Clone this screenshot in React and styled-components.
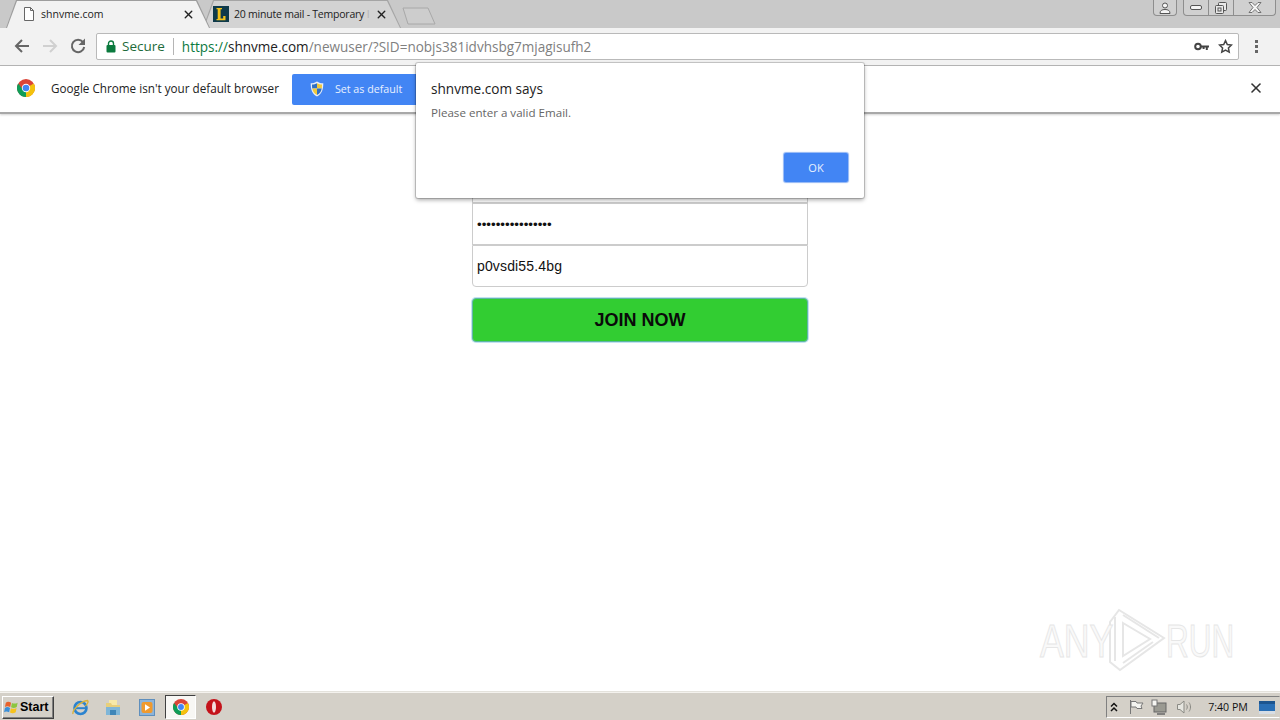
import React from "react";
import styled, { createGlobalStyle } from "styled-components";
import { X } from "lucide-react";

const uiFont = `"Open Sans", "Noto Sans", sans-serif`;

const Global = createGlobalStyle`
html, body {
  margin: 0;
  height: 100%;
  overflow: hidden;
  background: #fff;
}
* { box-sizing: border-box; }
`;

const Screen = styled.div`
position: relative;
display: flex;
flex-direction: column;
width: 100%;
height: 100vh;
font-family: ${uiFont};
`;

const TabStrip = styled.div`
display: flex;
align-items: flex-start;
height: 28px;
padding-left: 6px;
background: #c9c9c9;
flex-shrink: 0;
`;

const Tab = styled.div`
position: relative;
display: flex;
align-items: center;
width: ${(p) => p.$width}px;
height: 28px;
margin-left: ${(p) => (p.$active ? 0 : -7)}px;
padding-left: ${(p) => p.$pad}px;
z-index: ${(p) => (p.$active ? 2 : 1)};
&::before {
  content: "";
  position: absolute;
  inset: 0;
  background: ${(p) => (p.$active ? "#9d9d9d" : "#a5a5a5")};
  clip-path: polygon(0 100%, 10px 0, calc(100% - 13px) 0, 100% 100%);
}
&::after {
  content: "";
  position: absolute;
  inset: 1px 1px 0 1px;
  background: ${(p) => (p.$active ? "#f2f2f2" : "#d3d3d3")};
  clip-path: polygon(0 100%, 10px 0, calc(100% - 13px) 0, 100% 100%);
}
`;

const TabLabel = styled.span`
position: relative;
z-index: 1;
width: ${(p) => p.$width}px;
margin-left: ${(p) => p.$gap}px;
white-space: nowrap;
font-size: 10.5px;
letter-spacing: ${(p) => p.$spacing || 0}px;
color: #222;
`;

const TabFade = styled.span`
color: #b4b4b4;
`;

const TabIcon = styled.span`
position: relative;
z-index: 1;
display: flex;
`;

const TabClose = styled.span`
position: relative;
z-index: 1;
display: flex;
margin-left: ${(p) => p.$gap}px;
color: #222;
`;

const NewTab = styled.svg`
margin: 6px 0 0 1px;
flex-shrink: 0;
`;

const WindowArea = styled.div`
display: flex;
align-items: flex-start;
gap: 6px;
margin-left: auto;
padding-right: 4px;
`;

const WindowGroup = styled.div`
display: flex;
height: 16px;
border: 1px solid #8e8e8e;
border-top: none;
border-radius: 0 0 4px 4px;
background: #d0d0d0;
`;

const WindowBtn = styled.div`
display: flex;
align-items: center;
justify-content: center;
width: ${(p) => p.$width}px;
& + & { border-left: 1px solid #8e8e8e; }
`;

const Toolbar = styled.div`
display: flex;
align-items: center;
height: 38px;
padding: 0 0 1px 13px;
background: #f2f2f2;
border-bottom: 1px solid #b6b6b6;
flex-shrink: 0;
`;

const NavBtn = styled.div`
display: flex;
width: 18px;
margin-right: ${(p) => p.$gap}px;
`;

const Omnibox = styled.div`
display: flex;
align-items: center;
width: 1143px;
height: 27px;
margin-left: 9px;
padding: 1px 0 0 9px;
background: #fff;
border: 1px solid #b9b9b9;
border-radius: 2px;
`;

const SecureText = styled.span`
margin-left: 6px;
padding-right: 8px;
border-right: 1px solid #b5b5b5;
font-size: 13.5px;
line-height: 17px;
color: #1e6b3a;
`;

const Url = styled.div`
margin-left: 8px;
font-size: 13.54px;
white-space: nowrap;
color: #808080;
`;

const UrlScheme = styled.span`
color: #0b7a3e;
`;

const UrlHost = styled.span`
color: #222;
`;

const OmniIcons = styled.div`
display: flex;
align-items: center;
gap: 9px;
margin-left: auto;
padding-right: 5px;
`;

const MenuDots = styled.div`
display: flex;
flex-direction: column;
gap: 2px;
margin-left: 16px;
`;

const Dot = styled.i`
width: 3px;
height: 3px;
background: #666;
`;

const InfoBar = styled.div`
position: relative;
display: flex;
align-items: center;
height: 48px;
padding: 0 16px 2px 17px;
background: #fff;
border-bottom: 2px solid #a8a8a8;
box-shadow: 0 1px 2px rgba(0, 0, 0, 0.18);
flex-shrink: 0;
`;

const InfoText = styled.span`
margin-left: 16px;
font-size: 11.7px;
color: #222;
white-space: nowrap;
`;

const DefaultBtn = styled.div`
display: flex;
align-items: center;
width: 130px;
height: 31px;
margin: 2px 0 0 13px;
padding-left: 18px;
background: #4285f4;
border-radius: 2px;
color: #fff;
font-size: 10.7px;
`;

const DefaultLabel = styled.span`
margin-left: 11px;
color: #e8f0fe;
`;

const InfoClose = styled.div`
display: flex;
margin-left: auto;
color: #333;
`;

const Page = styled.main`
flex: 1;
display: flex;
flex-direction: column;
align-items: center;
padding-top: 47px;
background: #fff;
`;

const Form = styled.form`
display: flex;
flex-direction: column;
width: 336px;
`;

const Field = styled.input`
display: block;
width: 100%;
height: 42px;
padding: 0 4px;
border: 1px solid #ccc;
border-radius: ${(p) => (p.$last ? "0 0 4px 4px" : "0")};
background: #fff;
outline: none;
font-family: "Liberation Sans", Arial, sans-serif;
font-size: 14px;
letter-spacing: 0.15px;
color: #111;
`;

const PasswordField = styled(Field)`
font-size: 13.33px;
letter-spacing: 0;
`;

const JoinBtn = styled.button`
height: 44px;
margin-top: 11px;
border: 1px solid #5fb6a6;
border-radius: 4px;
background: #32cd32;
box-shadow: 0 0 0 1px rgba(120, 190, 225, 0.45);
font-family: "Liberation Sans", Arial, sans-serif;
font-size: 18px;
font-weight: 700;
color: #0a0a0a;
`;

const Dialog = styled.div`
position: absolute;
top: 63px;
left: 416px;
width: 448px;
height: 135px;
padding: 15px 16px 0 15px;
display: flex;
flex-direction: column;
background: #fff;
border-radius: 2px;
box-shadow: 0 0 0 1px rgba(0, 0, 0, 0.16), 0 2px 4px rgba(0, 0, 0, 0.35);
z-index: 5;
`;

const DialogTitle = styled.div`
font-size: 13.6px;
line-height: 21px;
color: #222;
`;

const DialogMsg = styled.div`
margin-top: 6px;
font-size: 11.6px;
line-height: 16px;
color: #666;
`;

const DialogOk = styled.div`
display: flex;
align-items: center;
justify-content: center;
align-self: flex-end;
width: 64px;
height: 29px;
margin-top: auto;
margin-bottom: 16px;
border-radius: 2px;
background: #4285f4;
box-shadow: 0 0 1px 1px #8fb5f5;
color: #e8f0fe;
font-size: 11px;
`;

const Watermark = styled.div`
position: absolute;
left: 1040px;
top: 607px;
display: flex;
align-items: center;
height: 66px;
pointer-events: none;
`;

const WatermarkWord = styled.span`
display: block;
width: ${(p) => p.$width}px;
transform: scaleX(${(p) => p.$scale});
transform-origin: left center;
font-family: "Liberation Sans", Arial, sans-serif;
font-size: 47px;
line-height: 1;
color: #f9f9f9;
-webkit-text-stroke: 1px #e6e6e6;
white-space: nowrap;
`;

const Taskbar = styled.footer`
display: flex;
align-items: center;
height: 28px;
padding: 1px 0 0 2px;
background: #d4d0c8;
border-top: 1px solid #f4f2ee;
box-shadow: 0 -1px 0 #e4e2dc;
flex-shrink: 0;
`;

const StartBtn = styled.div`
display: flex;
align-items: center;
gap: 1px;
width: 52px;
height: 23px;
padding-left: 1px;
background: #d4d0c8;
border: 1px solid;
border-color: #fff #404040 #404040 #fff;
box-shadow: inset -1px -1px 0 #808080;
font-family: "Liberation Sans", Arial, sans-serif;
font-size: 12.5px;
font-weight: 700;
color: #000;
`;

const Launch = styled.div`
display: flex;
align-items: center;
justify-content: center;
width: ${(p) => p.$width || 18}px;
height: 24px;
margin-left: ${(p) => p.$gap}px;
background: ${(p) => (p.$active ? "#f8f7f4" : "transparent")};
border: ${(p) => (p.$active ? "1px solid" : "none")};
border-color: #404040 #fff #fff #404040;
`;

const Tray = styled.div`
display: flex;
align-items: center;
height: 22px;
margin-left: auto;
padding-left: 1px;
border: 1px solid;
border-color: #808080 transparent #fff #808080;
`;

const TraySlot = styled.div`
display: flex;
justify-content: center;
width: ${(p) => p.$width}px;
`;

const Clock = styled.span`
width: 54px;
text-align: center;
font-size: 10.6px;
color: #111;
`;

const ChromeLogo = ({ size = 18 }) => (
    <svg width={size} height={size} viewBox="0 0 24 24">
        <circle cx="12" cy="12" r="12" fill="#db4437" />
        <path d="M12 12 L22.4 6 A12 12 0 0 1 12 24 Z" fill="#f4c20d" />
        <path d="M12 12 L12 24 A12 12 0 0 1 1.6 6 L7 13 Z" fill="#0f9d58" />
        <circle cx="12" cy="12" r="5.6" fill="#fff" />
        <circle cx="12" cy="12" r="4.4" fill="#4285f4" />
    </svg>
);

const BackIcon = ({ color }) => (
    <svg width="18" height="18" viewBox="0 0 18 18" fill="none" stroke={color} strokeWidth="2">
        <path d="M16 9H3M9 3L3 9l6 6" />
    </svg>
);

const ForwardIcon = ({ color }) => (
    <svg width="18" height="18" viewBox="0 0 18 18" fill="none" stroke={color} strokeWidth="2">
        <path d="M2 9h13M9 3l6 6-6 6" />
    </svg>
);

const ReloadIcon = () => (
    <svg width="18" height="18" viewBox="0 0 18 18" fill="none">
        <path d="M14 5.2A6.2 6.2 0 1 0 15.2 10" stroke="#666" strokeWidth="2" />
        <path d="M16 1.5V8H9.5z" fill="#666" />
    </svg>
);

const LockIcon = () => (
    <svg width="10" height="13" viewBox="0 0 10 13">
        <path d="M2.5 5V3.5a2.5 2.5 0 0 1 5 0V5" fill="none" stroke="#0b7a3e" strokeWidth="1.4" />
        <rect x="0.5" y="5" width="9" height="7.5" rx="1" fill="#0b7a3e" />
    </svg>
);

const KeyIcon = () => (
    <svg width="15" height="9" viewBox="0 0 15 9">
        <circle cx="4" cy="4.5" r="2.8" fill="none" stroke="#444" strokeWidth="2" />
        <path d="M6.5 3.4H15v2.2h-1.2V8h-2V5.6h-1.2V7h-2V5.6H6.5z" fill="#444" />
    </svg>
);

const StarIcon = () => (
    <svg width="15" height="15" viewBox="0 0 15 15" fill="none" stroke="#444" strokeWidth="1.5">
        <path d="M7.5 1.6l1.8 3.9 4.2.5-3.1 2.9.8 4.2-3.7-2.1-3.7 2.1.8-4.2L1.5 6l4.2-.5z" />
    </svg>
);

const DocIcon = () => (
    <svg width="12" height="14" viewBox="0 0 12 14" fill="#fff" stroke="#666">
        <path d="M1.5.5h6l3 3v10h-9zM7.5.5v3h3" />
    </svg>
);

const LetterFavicon = () => (
    <svg width="16" height="16" viewBox="0 0 16 16">
        <rect width="16" height="16" fill="#0e3a4a" />
        <path d="M3.5 2h5.5v1.2H7.6v9.4h2.6V10h2.3v4.2h-9V13h1.2V3.2H3.5z" fill="#f2c21a" />
    </svg>
);

const ShieldIcon = () => (
    <svg width="14" height="16" viewBox="0 0 14 16">
        <path d="M7 .5c2 1.3 4 1.8 6.3 1.8 0 6-1.3 10.700-6.300 13.200C2 13 .700 8.300.700 2.300 3 2.300 5 1.800 7 .5z" fill="#e9eef6" />
        <path d="M7 2.300v5.200H2.200c-.1-1.200-.2-2.300-.2-3.900C3.800 3.500 5.500 3.200 7 2.300z" fill="#2f6fc4" />
        <path d="M7 2.300c1.500.9 3.200 1.200 5 1.300 0 1.600-.1 2.700-.2 3.900H7z" fill="#f1c93b" />
        <path d="M2.300 7.500H7v6.600C4 12.500 2.800 10.300 2.300 7.500z" fill="#f1c93b" />
        <path d="M7 7.500h4.700c-.5 2.800-1.700 5-4.700 6.600z" fill="#2f6fc4" />
    </svg>
);

const UserIcon = () => (
    <svg width="12" height="12" viewBox="0 0 12 12" fill="#f5f5f5" stroke="#555">
        <circle cx="6" cy="3.500" r="2.500" />
        <path d="M1 11.500c0-3 2-4 5-4s5 1 5 4z" />
    </svg>
);

const MinIcon = () => (
    <svg width="12" height="7" viewBox="0 0 12 7" fill="#f5f5f5" stroke="#555">
        <rect x="0.500" y="1.500" width="11" height="4" rx="1.500" />
    </svg>
);

const RestoreIcon = () => (
    <svg width="12" height="12" viewBox="0 0 12 12" fill="#e8e8e8" stroke="#555">
        <rect x="3.500" y="0.500" width="8" height="8" rx="1" />
        <rect x="0.500" y="3.500" width="8" height="8" rx="1" />
        <rect x="3" y="6" width="3" height="3" fill="none" />
    </svg>
);

const CloseGlyph = () => (
    <svg width="14" height="11" viewBox="0 0 14 11" fill="#f5f5f5" stroke="#666" strokeWidth="0.900">
        <path d="M1 .5h3L7 3.500 10 .5h3L9 5.500l4 5h-3L7 7.500 4 10.500H1l4-5z" />
    </svg>
);

const WatermarkLogo = () => (
    <svg width="60" height="64" viewBox="0 0 60 64" fill="none" stroke="#e6e6e6" strokeWidth="2">
        <path d="M4 14L13 2l45 28-44 32-10-8z" />
        <path d="M17 15l27 16-27 17z" />
        <path d="M9 9v44M17 7l36 23M17 55l30-21" />
    </svg>
);

const WinFlag = () => (
    <svg width="15" height="14" viewBox="0 0 17 16">
        <path d="M2 3c2-1.500 4-1 6 0l-1 5c-2-1-4-1.500-6 0z" fill="#e8622c" />
        <path d="M9 3.300c2 1 4 1.200 6.500-.3l-1 5c-2.500 1.500-4.500 1.300-6.500.3z" fill="#8cc63f" />
        <path d="M1 9c2-1.500 4-1 5.800 0l-1 5c-2-1-3.800-1.500-5.800 0z" fill="#3a8fd9" />
        <path d="M7.800 9.300c2 1 4 1.200 6.500-.3l-1 5c-2.500 1.500-4.500 1.300-6.500.3z" fill="#f6c21c" />
    </svg>
);

const IeIcon = () => (
    <svg width="17" height="17" viewBox="0 0 17 17">
        <circle cx="8.500" cy="9" r="6" fill="none" stroke="#2b83cf" strokeWidth="2.600" />
        <path d="M3 9.200h11" stroke="#2b83cf" strokeWidth="2" />
        <path d="M1 15C0 11 9 2 15.500 1.500c1.500 1-.5 4-2 5.500" fill="none" stroke="#d8b23c" strokeWidth="1.400" />
    </svg>
);

const FolderIcon = () => (
    <svg width="16" height="17" viewBox="0 0 16 17">
        <path d="M4 1h8v6H4z" fill="#f6e9a8" />
        <path d="M1 4h5l1 2h8v10H1z" fill="#e7cf7b" />
        <path d="M1 8h14v8H1z" fill="#7fb6d8" />
        <path d="M5 11h6v5H5z" fill="#3f86b8" />
    </svg>
);

const MediaIcon = () => (
    <svg width="16" height="17" viewBox="0 0 16 17">
        <rect x="0.500" y="0.500" width="15" height="16" fill="#8db4d9" stroke="#5f8fbd" />
        <rect x="2.500" y="3" width="11" height="11" rx="2" fill="#f09a2e" />
        <path d="M6 5.200l5 3.300-5 3.300z" fill="#fff" />
    </svg>
);

const OperaIcon = () => (
    <svg width="16" height="16" viewBox="0 0 16 16">
        <circle cx="8" cy="8" r="8" fill="#c4121a" />
        <ellipse cx="8" cy="8" rx="2" ry="5.800" fill="#f3dcdc" />
    </svg>
);

const TrayChevrons = () => (
    <svg width="8" height="10" viewBox="0 0 8 10" fill="none" stroke="#111" strokeWidth="1.500">
        <path d="M1 4.500l3-3 3 3M1 9l3-3 3 3" />
    </svg>
);

const TrayFlag = () => (
    <svg width="16" height="16" viewBox="0 0 16 16" fill="#f4f4f0" stroke="#777">
        <path d="M2.500 1v14" />
        <path d="M3 2.500h5l1 1.500h6l-2 3 1 2.500H9L8 8H3z" />
    </svg>
);

const TrayNetwork = () => (
    <svg width="16" height="16" viewBox="0 0 16 16">
        <rect x="3" y="4" width="12" height="9" fill="#9a9a92" stroke="#666" />
        <rect x="1" y="1" width="5" height="6" fill="#f6f6f2" stroke="#777" />
        <path d="M6 15h8" stroke="#666" strokeWidth="1.500" />
    </svg>
);

const TraySpeaker = () => (
    <svg width="17" height="16" viewBox="0 0 17 16" fill="none" stroke="#8a8a84">
        <path d="M1.500 5.500h2.500l4-3.500v12l-4-3.500H1.500z" fill="#e6e6e0" />
        <path d="M10.500 5.500c1 1.500 1 3.500 0 5M13 3.500c2 2.500 2 6.500 0 9" />
    </svg>
);

const DesktopIcon = () => (
    <svg width="16" height="13" viewBox="0 0 16 13">
        <rect width="16" height="13" fill="#2a6fb5" />
        <rect y="10" width="16" height="3" fill="#d7dde4" />
        <path d="M0 0h16v3H0z" fill="#1d558f" />
    </svg>
);

const App = () => {
    return <Screen>
        <Global />

        <TabStrip>
            <Tab $active $width={204} $pad={17}>
                <TabIcon><DocIcon /></TabIcon>
                <TabLabel $width={143} $gap={6}>shnvme.com</TabLabel>
                <TabClose $gap={-2}><X size={13} strokeWidth={2.6} /></TabClose>
            </Tab>
            <Tab $width={198} $pad={10}>
                <TabIcon><LetterFavicon /></TabIcon>
                <TabLabel $width={140} $gap={5} $spacing={-0.22}>20 minute mail - Temporary <TabFade>I</TabFade></TabLabel>
                <TabClose $gap={1}><X size={13} strokeWidth={2.6} /></TabClose>
            </Tab>
            <NewTab width="36" height="20" viewBox="0 0 36 20" fill="#cdcdcd" stroke="#a8a8a8">
                <path d="M1 2h25l7 16H6z" />
            </NewTab>
            <WindowArea>
                <WindowGroup>
                    <WindowBtn $width={22}><UserIcon /></WindowBtn>
                </WindowGroup>
                <WindowGroup>
                    <WindowBtn $width={24}><MinIcon /></WindowBtn>
                    <WindowBtn $width={25}><RestoreIcon /></WindowBtn>
                    <WindowBtn $width={42}><CloseGlyph /></WindowBtn>
                </WindowGroup>
            </WindowArea>
        </TabStrip>

        <Toolbar>
            <NavBtn $gap={10}><BackIcon color="#666" /></NavBtn>
            <NavBtn $gap={10}><ForwardIcon color="#d0d0d0" /></NavBtn>
            <NavBtn $gap={0}><ReloadIcon /></NavBtn>
            <Omnibox>
                <LockIcon />
                <SecureText>Secure</SecureText>
                <Url>
                    <UrlScheme>https://</UrlScheme>
                    <UrlHost>shnvme.com</UrlHost>
                    /newuser/?SID=nobjs381idvhsbg7mjagisufh2
                </Url>
                <OmniIcons>
                    <KeyIcon />
                    <StarIcon />
                </OmniIcons>
            </Omnibox>
            <MenuDots><Dot /><Dot /><Dot /></MenuDots>
        </Toolbar>

        <InfoBar>
            <ChromeLogo />
            <InfoText>Google Chrome isn't your default browser</InfoText>
            <DefaultBtn>
                <ShieldIcon />
                <DefaultLabel>Set as default</DefaultLabel>
            </DefaultBtn>
            <InfoClose><X size={16} strokeWidth={2.4} /></InfoClose>
        </InfoBar>

        <Page>
            <Form>
                <Field type="text" defaultValue="" readOnly />
                <PasswordField type="password" defaultValue="p0vsdi55.4bgxxxx" readOnly />
                <Field $last type="text" defaultValue="p0vsdi55.4bg" readOnly />
                <JoinBtn type="button">JOIN NOW</JoinBtn>
            </Form>
        </Page>

        <Dialog>
            <DialogTitle>shnvme.com says</DialogTitle>
            <DialogMsg>Please enter a valid Email.</DialogMsg>
            <DialogOk>OK</DialogOk>
        </Dialog>

        <Watermark>
            <WatermarkWord $width={66} $scale={0.76}>ANY</WatermarkWord>
            <WatermarkLogo />
            <WatermarkWord $width={66} $scale={0.67}>RUN</WatermarkWord>
        </Watermark>

        <Taskbar>
            <StartBtn><WinFlag />Start</StartBtn>
            <Launch $gap={17}><IeIcon /></Launch>
            <Launch $gap={15}><FolderIcon /></Launch>
            <Launch $gap={16}><MediaIcon /></Launch>
            <Launch $active $width={31} $gap={9}><ChromeLogo size={16} /></Launch>
            <Launch $gap={9}><OperaIcon /></Launch>
            <Tray>
                <TraySlot $width={12}><TrayChevrons /></TraySlot>
                <TraySlot $width={31}><TrayFlag /></TraySlot>
                <TraySlot $width={16}><TrayNetwork /></TraySlot>
                <TraySlot $width={34}><TraySpeaker /></TraySlot>
                <Clock>7:40 PM</Clock>
                <TraySlot $width={24}><DesktopIcon /></TraySlot>
            </Tray>
        </Taskbar>
    </Screen>
}

export default App;
